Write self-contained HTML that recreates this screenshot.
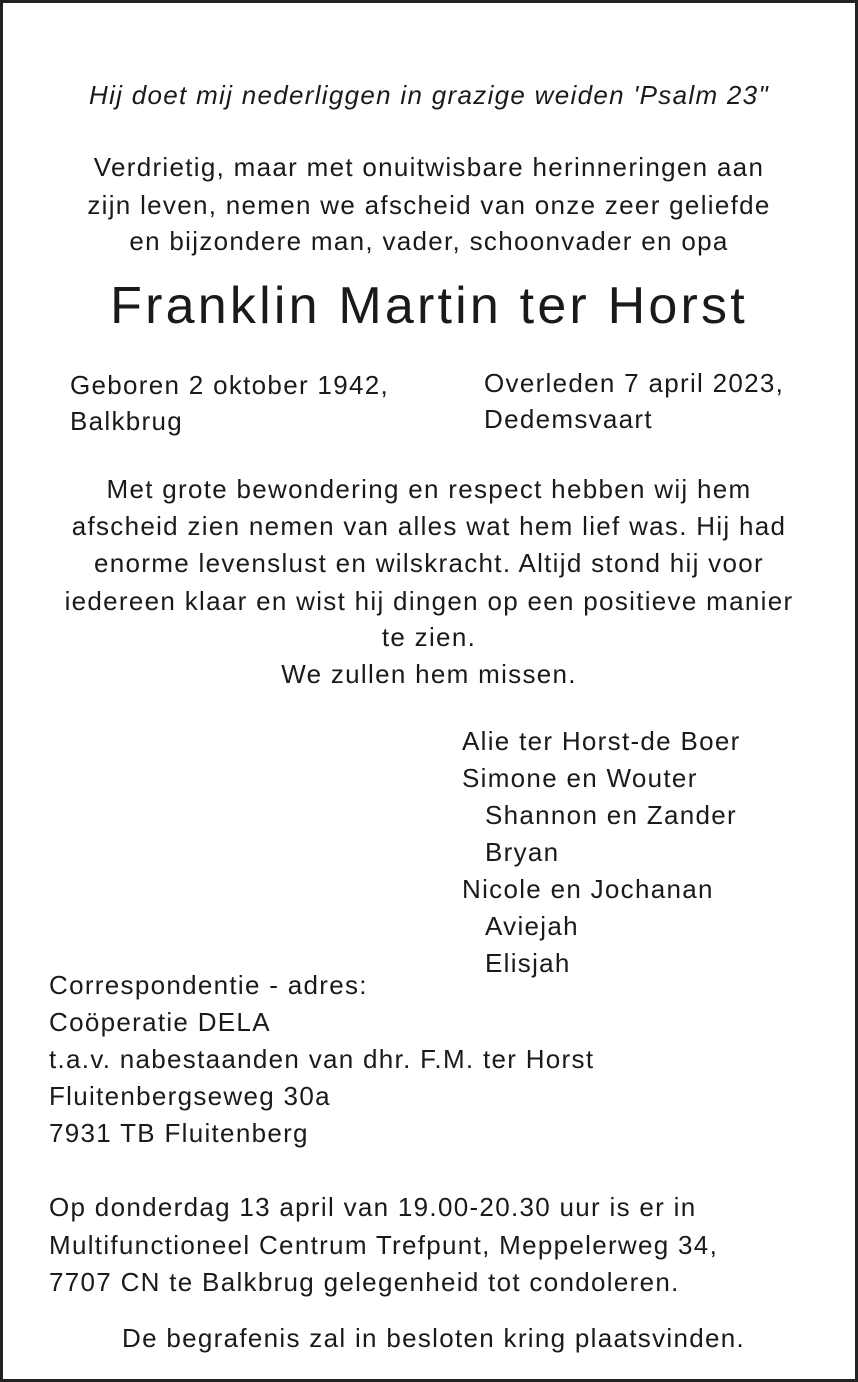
<!DOCTYPE html>
<html><head><meta charset="utf-8"><style>
html,body{margin:0;padding:0;background:#fff}
body{width:858px;height:1382px;position:relative;overflow:hidden;font-family:"Liberation Sans",sans-serif;color:#1a1a1a;font-size:26px;letter-spacing:1.3px}
.frame{position:absolute;left:0;top:0;width:852px;height:1376px;border:3px solid #222}
.l{position:absolute;height:36px;line-height:36px;white-space:nowrap}
.c{left:0;width:858px;text-align:center}
</style></head><body>
<div class="frame"></div>
<div class="l c" style="top:77px;font-style:italic;">Hij doet mij nederliggen in grazige weiden 'Psalm 23"</div>
<div class="l c" style="top:149px">Verdrietig, maar met onuitwisbare herinneringen aan</div>
<div class="l c" style="top:187px">zijn leven, nemen we afscheid van onze zeer geliefde</div>
<div class="l c" style="top:223px">en bijzondere man, vader, schoonvader en opa</div>
<div class="l c" style="top:276px;height:60px;line-height:60px;font-size:52px;letter-spacing:3.2px">Franklin Martin ter Horst</div>
<div class="l" style="top:367px;left:70px">Geboren 2 oktober 1942,</div>
<div class="l" style="top:403px;left:70px">Balkbrug</div>
<div class="l" style="top:365px;left:484px">Overleden 7 april 2023,</div>
<div class="l" style="top:401px;left:484px">Dedemsvaart</div>
<div class="l c" style="top:471px">Met grote bewondering en respect hebben wij hem</div>
<div class="l c" style="top:508px">afscheid zien nemen van alles wat hem lief was. Hij had</div>
<div class="l c" style="top:545px">enorme levenslust en wilskracht. Altijd stond hij voor</div>
<div class="l c" style="top:583px">iedereen klaar en wist hij dingen op een positieve manier</div>
<div class="l c" style="top:619px">te zien.</div>
<div class="l c" style="top:656px">We zullen hem missen.</div>
<div class="l" style="top:723px;left:462px">Alie ter Horst-de Boer</div>
<div class="l" style="top:760px;left:462px">Simone en Wouter</div>
<div class="l" style="top:797px;left:485px">Shannon en Zander</div>
<div class="l" style="top:834px;left:485px">Bryan</div>
<div class="l" style="top:871px;left:462px">Nicole en Jochanan</div>
<div class="l" style="top:908px;left:485px">Aviejah</div>
<div class="l" style="top:945px;left:485px">Elisjah</div>
<div class="l" style="top:967px;left:49px">Correspondentie - adres:</div>
<div class="l" style="top:1004px;left:49px">Coöperatie DELA</div>
<div class="l" style="top:1041px;left:49px">t.a.v. nabestaanden van dhr. F.M. ter Horst</div>
<div class="l" style="top:1078px;left:49px">Fluitenbergseweg 30a</div>
<div class="l" style="top:1115px;left:49px">7931 TB Fluitenberg</div>
<div class="l" style="top:1189px;left:49px">Op donderdag 13 april van 19.00-20.30 uur is er in</div>
<div class="l" style="top:1227px;left:49px">Multifunctioneel Centrum Trefpunt, Meppelerweg 34,</div>
<div class="l" style="top:1264px;left:49px">7707 CN te Balkbrug gelegenheid tot condoleren.</div>
<div class="l" style="top:1320px;left:122px">De begrafenis zal in besloten kring plaatsvinden.</div>
</body></html>
